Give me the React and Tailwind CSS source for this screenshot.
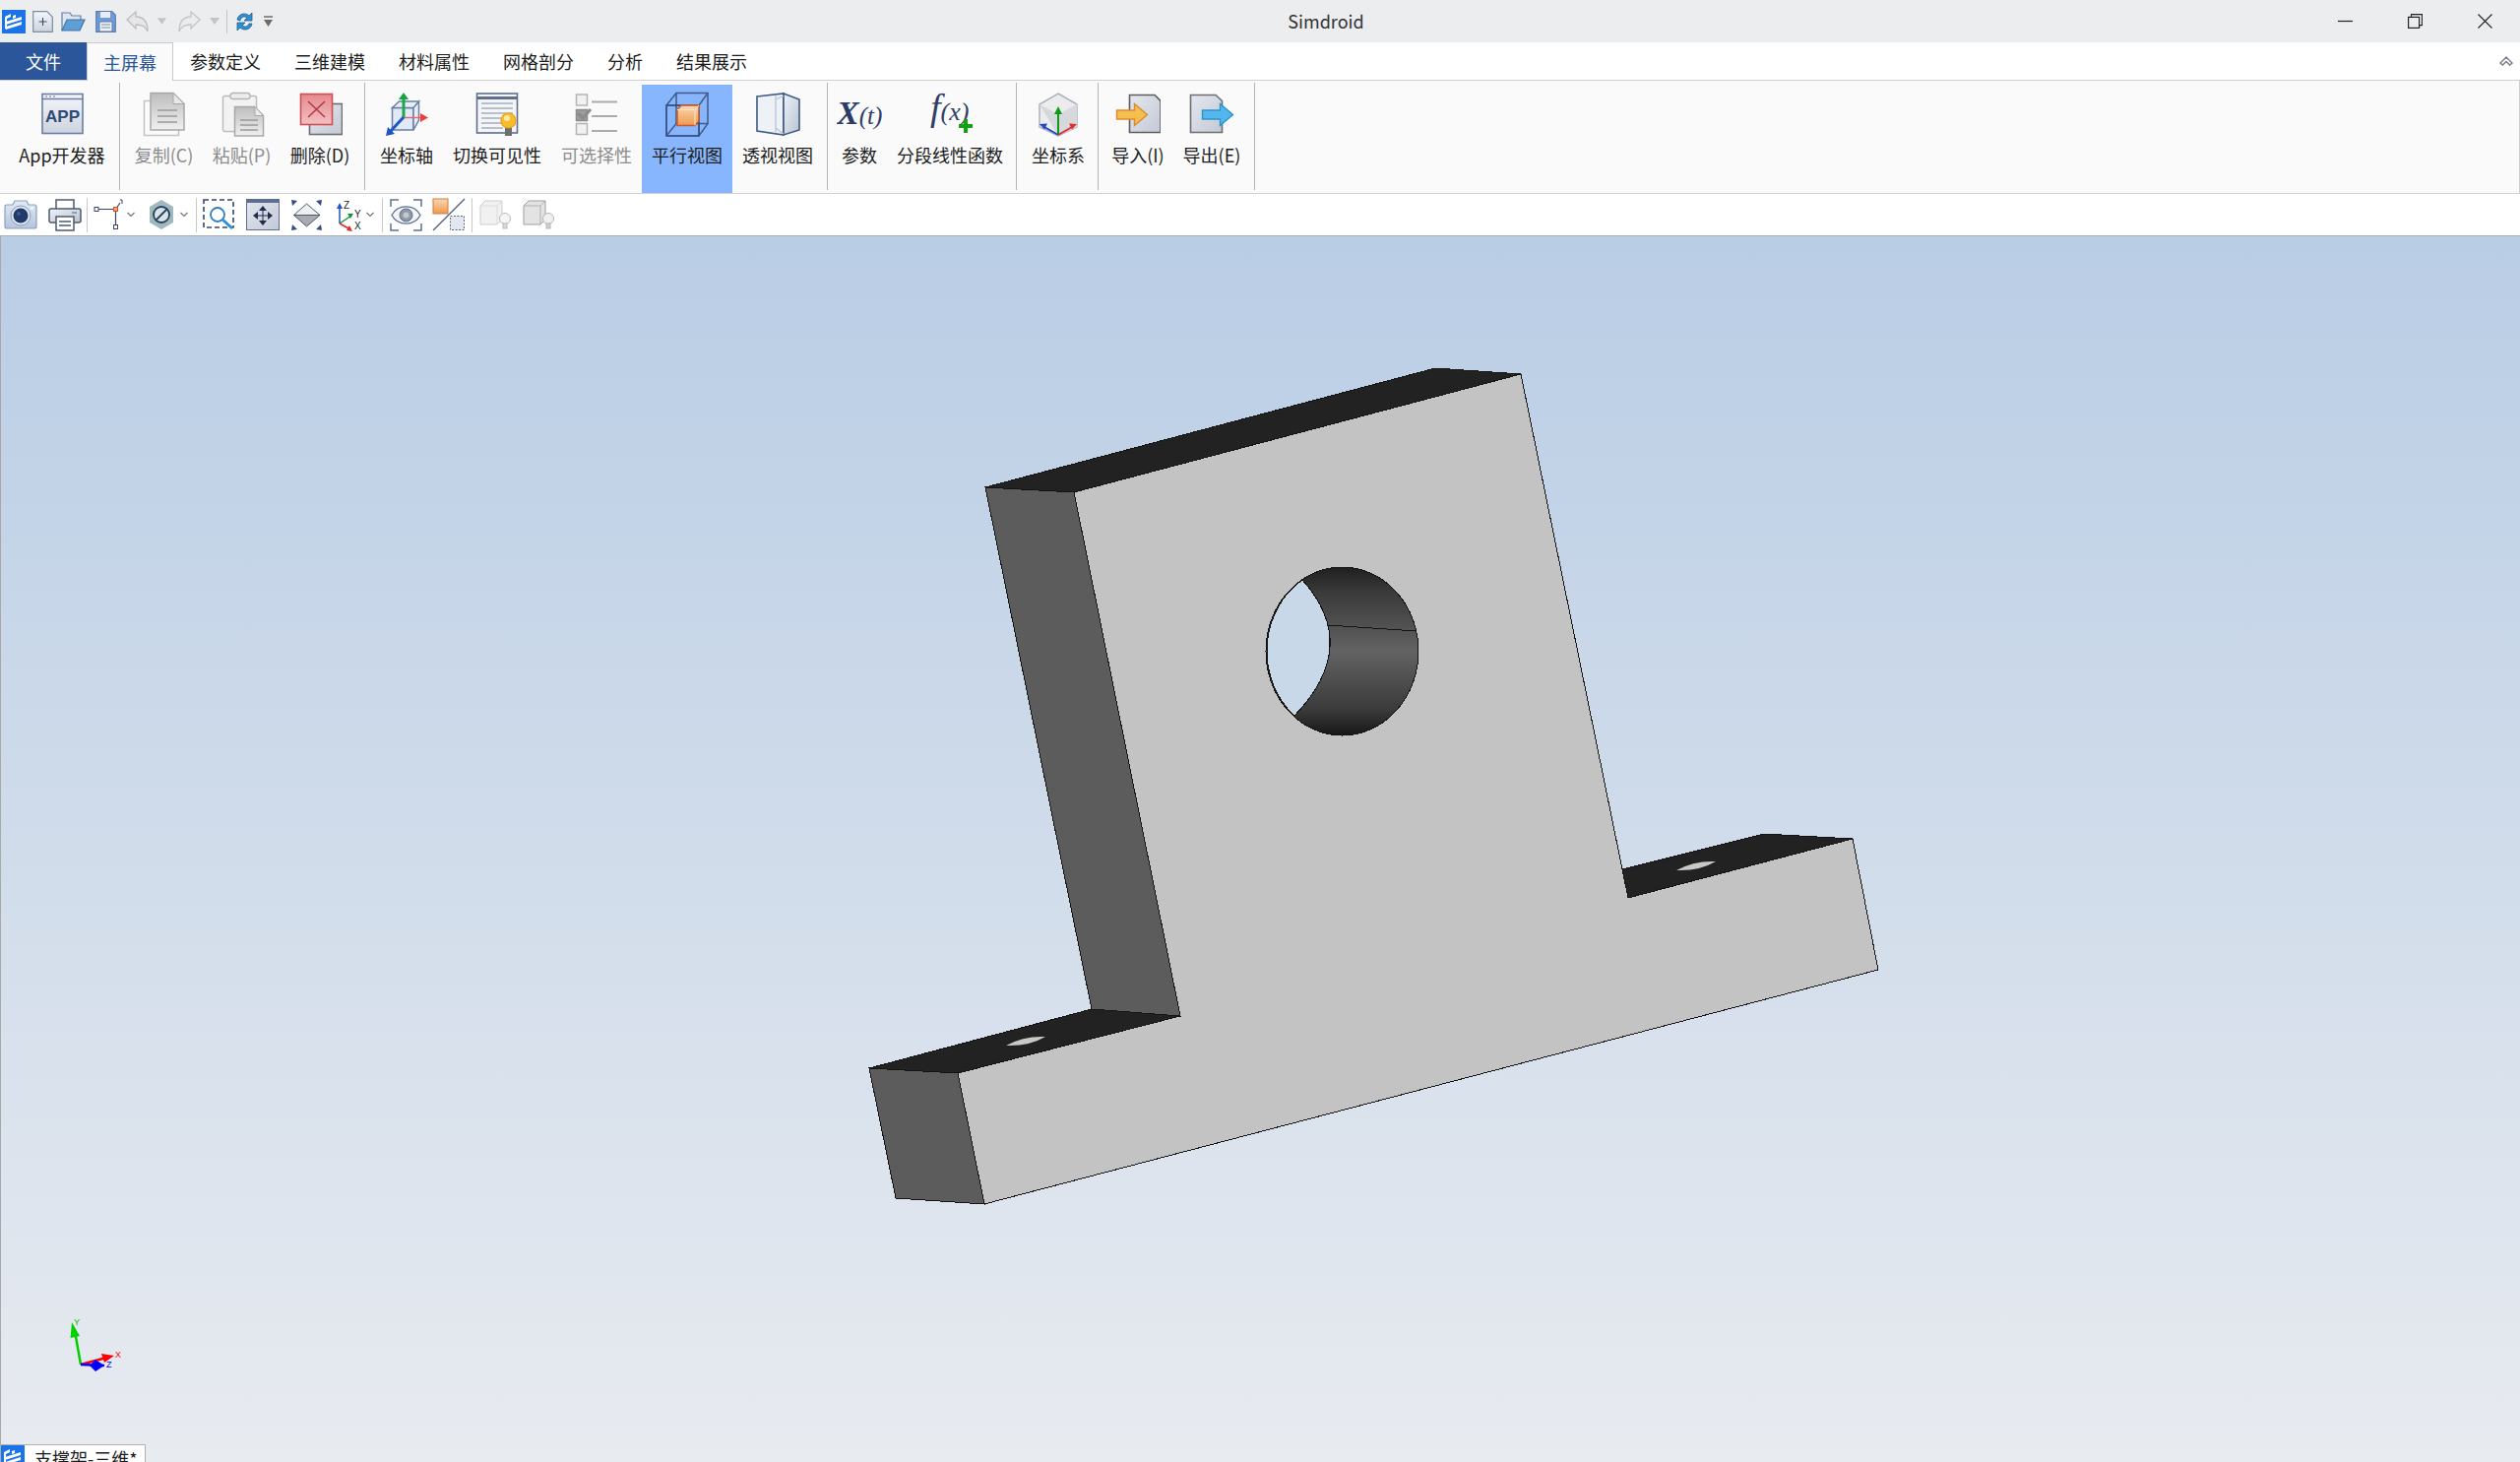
import React from "react";

const tabs = ["参数定义", "三维建模", "材料属性", "网格剖分", "分析", "结果展示"];

// shared gradients for the icon drawings
const Defs = () => (
  <svg className="absolute w-0 h-0">
    <defs>
      <linearGradient id="paper" x1="0" y1="0" x2="0" y2="1">
        <stop offset="0" stopColor="#f4f6fa" />
        <stop offset="1" stopColor="#cdd3de" />
      </linearGradient>
      <linearGradient id="paperGrey" x1="0" y1="0" x2="0" y2="1">
        <stop offset="0" stopColor="#bdbdbd" />
        <stop offset="1" stopColor="#f0f0f0" />
      </linearGradient>
      <linearGradient id="docBlue" x1="0" y1="0" x2="1" y2="1">
        <stop offset="0" stopColor="#e4e7ee" />
        <stop offset="1" stopColor="#c3c9d6" />
      </linearGradient>
      <linearGradient id="red" x1="0" y1="0" x2="0" y2="1">
        <stop offset="0" stopColor="#e58a8f" />
        <stop offset="1" stopColor="#f3c0c2" />
      </linearGradient>
      <linearGradient id="orange" x1="0" y1="0" x2="0" y2="1">
        <stop offset="0" stopColor="#f9d8b4" />
        <stop offset="1" stopColor="#ee9a4d" />
      </linearGradient>
      <linearGradient id="glass" x1="0" y1="0" x2="1" y2="1">
        <stop offset="0" stopColor="#eef3fa" />
        <stop offset="1" stopColor="#b9c2d1" />
      </linearGradient>
      <linearGradient id="camera" x1="0" y1="0" x2="0" y2="1">
        <stop offset="0" stopColor="#e3eaf4" />
        <stop offset="1" stopColor="#b4c4dc" />
      </linearGradient>
      <linearGradient id="hole" x1="0" y1="0" x2="0" y2="1">
        <stop offset="0" stopColor="#1f1f1f" />
        <stop offset="0.15" stopColor="#3a3a3a" />
        <stop offset="0.5" stopColor="#626262" />
        <stop offset="0.85" stopColor="#3a3a3a" />
        <stop offset="1" stopColor="#161616" />
      </linearGradient>
    </defs>
  </svg>
);

const Logo = ({ className }) => (
  <svg className={className} viewBox="0 0 24 24">
    <rect width="24" height="24" fill="#1a73e8" />
    <path d="M3 7l6-3v3l-6 3zM11 6l3-1v3l-3 1zM4 12l16-5v3L4 15zM4 17l16-5v3L4 20z" fill="#fff" />
    <path d="M3 8v11l2 1V9z" fill="#fff" />
  </svg>
);

const Chevron = ({ className }) => (
  <svg className={className} viewBox="0 0 8 6">
    <path d="M0.5 1l3.5 3.5L7.5 1" fill="none" stroke="#6d7683" strokeWidth="1.2" />
  </svg>
);

const Caret = ({ className }) => (
  <svg className={className} viewBox="0 0 10 7">
    <path d="M0 0h10L5 7z" fill="#c4c4c4" />
  </svg>
);

const ribbonIcons = {
  app: (
    <>
      <rect x="3" y="2.5" width="41" height="40" fill="url(#paper)" stroke="#6a7fa3" strokeWidth="1.6" />
      <path d="M3 7.5h41" stroke="#6a7fa3" strokeWidth="1.5" />
      <path d="M6 5h2M10 5h2M14 5h2" stroke="#6a7fa3" strokeWidth="1.2" />
      <text x="23.5" y="31" textAnchor="middle" fontSize="17" fontWeight="700" fill="#2f4a75" fontFamily="Liberation Sans, sans-serif">APP</text>
    </>
  ),
  copy: (
    <>
      <rect x="2.5" y="9.5" width="35" height="35" fill="#fafafa" stroke="#c2c2c2" strokeWidth="1.5" />
      <path d="M9 1.5h23l11 11V39H9z" fill="url(#paperGrey)" stroke="#a8a8a8" strokeWidth="1.5" />
      <path d="M32 1.5v11h11z" fill="#e8e8e8" stroke="#a8a8a8" />
      <path d="M16 19h20M16 25h20M16 31h20" stroke="#9a9a9a" strokeWidth="1.5" />
    </>
  ),
  paste: (
    <>
      <rect x="3.5" y="4.5" width="34" height="36" rx="2" fill="#f3f3f3" stroke="#bdbdbd" strokeWidth="1.5" />
      <rect x="11" y="1.5" width="20" height="6" rx="2.5" fill="#ececec" stroke="#b5b5b5" strokeWidth="1.3" />
      <path d="M15.5 15.5h20l9 9V45h-29z" fill="url(#paperGrey)" stroke="#a8a8a8" strokeWidth="1.5" />
      <path d="M36 15.5v9h8.5z" fill="#ededed" stroke="#a8a8a8" />
      <path d="M21 29h18M21 34h18M21 39h18" stroke="#9a9a9a" strokeWidth="1.3" />
    </>
  ),
  del: (
    <>
      <rect x="12.5" y="12.5" width="33" height="31" fill="url(#docBlue)" stroke="#6e6e6e" strokeWidth="1.6" />
      <rect x="3.5" y="2.5" width="32" height="31" fill="url(#red)" stroke="#d04f55" strokeWidth="1.6" />
      <path d="M11 10l17 16M28 10L11 26" stroke="#b23a40" strokeWidth="1.6" />
    </>
  ),
  axis: (
    <>
      <path d="M8.5 16.5h21.5v22.5H8.5z" fill="#d3e2f3" fillOpacity="0.7" stroke="#6a7fa3" strokeWidth="1.5" />
      <path d="M8.5 16.5l7-6.5h20l-5.5 6.5zM30 16.5l5.5-6.5v19L30 39z" fill="#e6eef8" stroke="#6a7fa3" strokeWidth="1.5" />
      <path d="M20 26V7" stroke="#20a848" strokeWidth="3" />
      <path d="M20 1l-5 7h10z" fill="#12a63e" />
      <path d="M20 26.5h18" stroke="#f0606a" strokeWidth="1.4" />
      <path d="M45 26.5l-8-4.5v9z" fill="#f23b3b" />
      <path d="M20 26L7 40" stroke="#1f55c9" strokeWidth="3" />
      <path d="M2 45l2-9 7 7z" fill="#1f55c9" />
    </>
  ),
  visible: (
    <>
      <rect x="2.5" y="2" width="41" height="40" fill="#f3f5f8" stroke="#5e6f8d" strokeWidth="1.6" />
      <path d="M2.5 6.5h41" stroke="#5e6f8d" strokeWidth="3" />
      <path d="M7 12h32M7 17h32M7 22h32M7 27h22M7 32h22M7 37h22" stroke="#a8afbc" strokeWidth="1.3" />
      <rect x="31" y="36" width="7" height="9" fill="#6e6e6e" />
      <circle cx="34.5" cy="29.5" r="7.5" fill="#f7bd2e" stroke="#eba017" strokeWidth="1.2" />
      <circle cx="33" cy="27" r="3" fill="#fde9a6" />
    </>
  ),
  select: (
    <>
      <rect x="2.5" y="3" width="11" height="11" fill="#f1f1f1" stroke="#b4b4b4" strokeWidth="1.5" />
      <rect x="2.5" y="18.5" width="11" height="11" fill="#9c9c9c" stroke="#8a8a8a" strokeWidth="1.5" />
      <path d="M4 22l5 5 8-9" fill="none" stroke="#8a8a8a" strokeWidth="3" />
      <rect x="2.5" y="32.5" width="11" height="11" fill="#f1f1f1" stroke="#b4b4b4" strokeWidth="1.5" />
      <path d="M18 10.5h26M18 25h26M18 40h26" stroke="#ababab" strokeWidth="2" />
    </>
  ),
  parallel: (
    <>
      <rect x="12" y="1.5" width="32" height="31" fill="none" stroke="#3f5a86" strokeWidth="1.5" />
      <rect x="2" y="14" width="33" height="31" fill="none" stroke="#2c4470" strokeWidth="1.6" />
      <path d="M2 14L12 1.5M35 14L44 1.5M35 45l9-12.5M2 45l10-12.5" stroke="#3f5a86" strokeWidth="1.4" />
      <path d="M13 18.5l4-4.5h18v16l-4 4.5H13z" fill="url(#orange)" stroke="#c9582a" strokeWidth="1.5" />
      <path d="M13 18.5h18v16M31 18.5l4-4.5" fill="none" stroke="#fbe4cb" strokeWidth="1" />
    </>
  ),
  perspective: (
    <>
      <path d="M2 5l27-3v42L2 40z" fill="#eef1f6" stroke="#3f5a86" strokeWidth="1.6" />
      <path d="M29 2l16 6v31l-16 5z" fill="url(#glass)" stroke="#3f5a86" strokeWidth="1.6" />
      <path d="M21 4.5v37M21 8l8-3.5M21 37l8 6" stroke="#b9c4d6" strokeWidth="1.3" fill="none" />
    </>
  ),
  param: (
    <text y="33" fill="#2a3c68" fontFamily="Liberation Serif, serif" fontStyle="italic">
      <tspan x="0" fontSize="34" fontWeight="700">X</tspan>
      <tspan fontSize="25">(t)</tspan>
    </text>
  ),
  func: (
    <>
      <text x="3" y="29" fill="#2f4068" fontFamily="Liberation Serif, serif" fontStyle="italic">
        <tspan fontSize="38">f</tspan>
        <tspan fontSize="26">(x)</tspan>
      </text>
      <path d="M39 28v14M32 35h14" stroke="#12a312" strokeWidth="4" />
    </>
  ),
  coord: (
    <>
      <path d="M23 2l19 11v23l-19 9-19-9V13z" fill="#ececec" stroke="#aab3bf" strokeWidth="1.5" />
      <path d="M4 13l19 10 19-10v23l-19 9z" fill="#d6d8dc" />
      <path d="M23 44V21" stroke="#0a9b18" strokeWidth="2" />
      <path d="M23 15l-4 8h8z" fill="#0a9b18" />
      <path d="M23 44l14-8" stroke="#df3030" strokeWidth="2" />
      <path d="M42 33l-8-.5 3 6z" fill="#df3030" />
      <path d="M23 44L9 36" stroke="#2049c2" strokeWidth="2" />
      <path d="M4 33l8-.5-3 6z" fill="#2049c2" />
    </>
  ),
  import: (
    <>
      <path d="M14.5 3.5H40l6 6v32H14.5z" fill="url(#docBlue)" stroke="#5d5d5d" strokeWidth="1.6" />
      <path d="M1.5 19h18v-6.5l13 11-13 11V28h-18z" fill="#f6bd4f" stroke="#dd8b2f" strokeWidth="1.4" />
    </>
  ),
  export: (
    <>
      <path d="M1.5 3.5H27l6.5 6v32H1.5z" fill="url(#docBlue)" stroke="#6f6f6f" strokeWidth="1.6" />
      <path d="M13.5 19h18v-6.5l13 11-13 11V28h-18z" fill="#53b7ec" stroke="#2b94cf" strokeWidth="1.4" />
    </>
  ),
};

const groups = [
  {
    className: "pl-[7px] pr-[2px]",
    items: [{ icon: "app", label: "App开发器", w: "w-[112px]" }],
  },
  {
    className: "pl-[5px] pr-[5px]",
    items: [
      { icon: "copy", label: "复制(C)", w: "w-[79px]", off: true },
      { icon: "paste", label: "粘贴(P)", w: "w-[79px]", off: true },
      { icon: "del", label: "删除(D)", w: "w-[80px]" },
    ],
  },
  {
    className: "pl-[5px] pr-[4px]",
    items: [
      { icon: "axis", label: "坐标轴", w: "w-[74px]" },
      { icon: "visible", label: "切换可见性", w: "w-[110px]" },
      { icon: "select", label: "可选择性", w: "w-[92px]", off: true },
      { icon: "parallel", label: "平行视图", w: "w-[92px]", active: true },
      { icon: "perspective", label: "透视视图", w: "w-[92px]" },
    ],
  },
  {
    className: "pl-[4px] pr-[3px]",
    items: [
      { icon: "param", label: "参数", w: "w-[56px]" },
      { icon: "func", label: "分段线性函数", w: "w-[128px]" },
    ],
  },
  {
    className: "pl-[5px] pr-[3px]",
    items: [{ icon: "coord", label: "坐标系", w: "w-[74px]" }],
  },
  {
    className: "pl-[4px] pr-[4px]",
    items: [
      { icon: "import", label: "导入(I)", w: "w-[72px]" },
      { icon: "export", label: "导出(E)", w: "w-[78px]" },
    ],
  },
];

const RibbonButton = ({ item }) => (
  <div
    className={`${item.w} mt-[4px] h-[110px] flex flex-col items-center pt-[7px] ${
      item.active ? "bg-[#87b6fe]" : ""
    }`}
  >
    <svg className="w-[46px] h-[46px] shrink-0" viewBox="0 0 46 46">
      {ribbonIcons[item.icon]}
    </svg>
    <div
      className={`mt-[5px] text-[18px] leading-[26px] whitespace-nowrap ${
        item.off ? "text-[#8c8c8c]" : "text-[#1c1c1c]"
      }`}
    >
      {item.label}
    </div>
  </div>
);

const ToolSep = ({ className }) => <div className={`w-px h-[35px] bg-[#c9c9c9] ${className}`} />;

const Toolbar = () => (
  <div className="h-[43px] shrink-0 bg-white border-b border-[#a9aeb5] flex items-center">
    <svg className="ml-[4px] w-[34px] h-[34px]" viewBox="0 0 34 34">
      <path d="M1 9q0-2 2-2h6l2-4h12l2 4h6q2 0 2 2v20q0 2-2 2H3q-2 0-2-2z" fill="url(#camera)" stroke="#8aa0bf" strokeWidth="1.2" />
      <circle cx="17" cy="18" r="10" fill="#dfe6f0" stroke="#8aa0bf" />
      <circle cx="17" cy="18" r="7.5" fill="#1f3a6b" />
      <circle cx="15" cy="16" r="2" fill="#3d5a8f" />
      <rect x="27" y="9.500" width="3" height="2" fill="#fff" />
    </svg>
    <svg className="ml-[11px] w-[34px] h-[34px]" viewBox="0 0 34 34">
      <path d="M8 11V2h18v9" fill="#fff" stroke="#4d5a6d" strokeWidth="1.5" />
      <rect x="1" y="11" width="32" height="14" rx="2" fill="url(#glass)" stroke="#4d5a6d" strokeWidth="1.5" />
      <path d="M24 15h5" stroke="#7f8b9b" strokeWidth="1.5" />
      <rect x="8" y="19" width="18" height="14" fill="#fff" stroke="#4d5a6d" strokeWidth="1.5" />
      <path d="M11 24h12M11 28h12" stroke="#4d5a6d" strokeWidth="1.5" />
    </svg>
    <ToolSep className="ml-[5px]" />
    <svg className="ml-[6px] w-[30px] h-[34px]" viewBox="0 0 30 34">
      <path d="M3 11.5h19.5V30M22.5 11.5L27 5" fill="none" stroke="#37476a" strokeWidth="1.2" />
      <rect x="1" y="9.5" width="4" height="4" fill="#fff" stroke="#37476a" />
      <rect x="20.5" y="9.5" width="4" height="4" fill="#f7a760" stroke="#c9502a" />
      <rect x="20.5" y="27.5" width="4" height="4" fill="#fff" stroke="#37476a" />
      <path d="M27 2h2v4" fill="none" stroke="#37476a" />
    </svg>
    <Chevron className="ml-[4px] w-[8px] h-[6px]" />
    <svg className="ml-[15px] w-[24px] h-[30px]" viewBox="0 0 24 30">
      <path d="M12 0l12 7v16l-12 7-12-7V7z" fill="#9fb9bd" />
      <circle cx="12" cy="15" r="8" fill="#d9e4e6" stroke="#24415f" strokeWidth="1.8" />
      <path d="M6 21L18 9" stroke="#24415f" strokeWidth="1.8" />
    </svg>
    <Chevron className="ml-[7px] w-[8px] h-[6px]" />
    <ToolSep className="ml-[8px]" />
    <svg className="ml-[6px] w-[32px] h-[32px]" viewBox="0 0 32 32">
      <rect x="1" y="1" width="30" height="28" fill="none" stroke="#37476a" strokeWidth="1.6" strokeDasharray="5 3" />
      <circle cx="15" cy="16" r="7" fill="#fff" stroke="#2f7fc1" strokeWidth="1.8" />
      <path d="M20 21l10 9" stroke="#2f8fd1" strokeWidth="3" />
    </svg>
    <svg className="ml-[12px] w-[34px] h-[33px]" viewBox="0 0 34 33">
      <rect x="0.5" y="0.5" width="33" height="31" fill="url(#docBlue)" stroke="#5c6f91" />
      <rect x="0.5" y="0.5" width="33" height="3.5" fill="#5c6f91" />
      <path d="M17 10v14M10 17h14" stroke="#1e2c4d" strokeWidth="1" />
      <path d="M17 7l-4 5h8zM17 27l-4-5h8zM7 17l5-4v8zM27 17l-5-4v8z" fill="#1e2c4d" />
    </svg>
    <svg className="ml-[11px] w-[33px] h-[33px]" viewBox="0 0 33 33">
      <path d="M16.5 5L30 16.5H3.500z" fill="#eef0f3" stroke="#4d5a6d" />
      <path d="M3.500 16.500h26.500L16.500 28z" fill="#a8abb0" stroke="#4d5a6d" />
      <path d="M1 1l6 1-5 5zM32 1l-6 1 5 5zM1 32l6-1-5-5zM32 32l-6-1 5-5z" fill="#2f4d80" />
    </svg>
    <svg className="ml-[14px] w-[26px] h-[33px]" viewBox="0 0 26 33">
      <path d="M3 25V8" stroke="#1f55c9" strokeWidth="1.5" />
      <path d="M3 4L0 10h6z" fill="#1f55c9" />
      <path d="M3 25l12-8" stroke="#0a9b3c" strokeWidth="1.5" />
      <path d="M17 15l-6 0 3 5z" fill="#0a9b3c" />
      <path d="M3 25l11 6" stroke="#e02a2a" strokeWidth="1.5" />
      <path d="M16 33l-6-1 3-5z" fill="#e02a2a" />
      <text x="7" y="10" fontSize="10" fill="#222" fontFamily="Liberation Sans, sans-serif">Z</text>
      <text x="18" y="19" fontSize="10" fill="#222" fontFamily="Liberation Sans, sans-serif">Y</text>
      <text x="18" y="31" fontSize="10" fill="#222" fontFamily="Liberation Sans, sans-serif">X</text>
    </svg>
    <Chevron className="ml-[4px] w-[8px] h-[6px]" />
    <ToolSep className="ml-[8px]" />
    <svg className="ml-[7px] w-[33px] h-[33px]" viewBox="0 0 33 33">
      <path d="M1 8V1h8M24 1h8v7M1 25v7h8M24 32h8v-7" fill="none" stroke="#5c6f91" strokeWidth="1.5" />
      <path d="M2 16.5C8 5 25 5 31 16.5 25 28 8 28 2 16.5z" fill="#f3f5f8" stroke="#5c6f91" strokeWidth="1.3" />
      <circle cx="16.5" cy="16.5" r="6.5" fill="#8f98a6" stroke="#5c6f91" />
      <circle cx="16.5" cy="16.5" r="3" fill="#c3c8d0" />
    </svg>
    <svg className="ml-[10px] w-[34px] h-[34px]" viewBox="0 0 34 34">
      <rect x="1" y="1" width="15" height="15" fill="url(#orange)" stroke="#d27b3c" />
      <path d="M1 33L33 1" stroke="#4d5f80" strokeWidth="1.3" />
      <rect x="18.5" y="18.5" width="14" height="14" fill="#e2e6ee" stroke="#55688a" strokeDasharray="2 1.5" />
    </svg>
    <ToolSep className="ml-[6px]" />
    <svg className="ml-[7px] w-[32px] h-[32px]" viewBox="0 0 32 32">
      <path d="M1 7l5-5h17v19l-5 5H1z" fill="#f1f1f1" stroke="#cdcdcd" />
      <path d="M1 7h17v19M18 7l5-5" fill="none" stroke="#dcdcdc" />
      <circle cx="26" cy="20" r="5.5" fill="#f5f5f5" stroke="#bcbcbc" />
      <rect x="24" y="25" width="4" height="5" fill="#d8d8d8" stroke="#bcbcbc" />
    </svg>
    <svg className="ml-[12px] w-[32px] h-[32px]" viewBox="0 0 32 32">
      <path d="M1 7l5-5h17v19l-5 5H1z" fill="#e3e3e3" stroke="#9d9d9d" />
      <path d="M1 7h17v19M18 7l5-5" fill="none" stroke="#b0b0b0" />
      <circle cx="26" cy="20" r="5.5" fill="#f0f0f0" stroke="#b5b5b5" />
      <rect x="24" y="25" width="4" height="5" fill="#cfcfcf" stroke="#b5b5b5" />
    </svg>
  </div>
);

const Model = () => (
  <svg className="block w-full h-full" viewBox="0 240 2560 1245">
    <g stroke="#141414" strokeWidth="1" shapeRendering="crispEdges">
      <path d="M1091 500L1545 380L1654 912L1882 852L1908 985L1000 1223L973 1090L1199 1032z" fill="#c3c3c3" />
      <path d="M1001 495L1458 374L1545 380L1091 500z" fill="#222222" />
      <path d="M1001 495L1091 500L1199 1032L1109 1025z" fill="#5c5c5c" />
      <path d="M883 1085L1109 1025L1199 1032L973 1090z" fill="#222222" />
      <path d="M883 1085L973 1090L1000 1223L910 1217z" fill="#5c5c5c" />
      <path d="M1648 883L1792 847L1882 852L1654 912z" fill="#222222" />
      <ellipse cx="1363.5" cy="661.5" rx="77.5" ry="85.5" fill="url(#hole)" />
      <path d="M1323 589A77.5 85.5 0 0 0 1315 727Q1383 656 1323 589z" fill="#c9d8e8" />
      <path d="M1349 635L1439 641" fill="none" />
    </g>
    {/* foot holes seen almost edge on */}
    <path d="M1022 1062Q1040 1052 1062 1053Q1045 1063 1022 1062z" fill="#c9c9c9" />
    <path d="M1703 884Q1721 874 1743 875Q1726 885 1703 884z" fill="#c9c9c9" />

    {/* triad */}
    <path d="M82 1386L76 1352" stroke="#00d000" strokeWidth="2.5" />
    <path d="M73 1343L71.5 1359L81 1357z" fill="#00d000" />
    <path d="M82 1386L108 1379" stroke="#ff0000" strokeWidth="2.5" />
    <path d="M116 1377L103 1375L106 1384z" fill="#ff0000" />
    <path d="M82 1386L106 1387" stroke="#0000ff" strokeWidth="2.5" />
    <path d="M91 1387L97 1381L106 1387L97 1393z" fill="#0000ff" />
    <text x="75" y="1346" fontSize="9" fill="#00c000" fontFamily="Liberation Sans, sans-serif">Y</text>
    <text x="117" y="1379" fontSize="9" fill="#ff0000" fontFamily="Liberation Sans, sans-serif">X</text>
    <text x="108" y="1389" fontSize="9" fill="#0000ff" fontFamily="Liberation Sans, sans-serif">Z</text>
  </svg>
);

const App = () => {
  return (
    <div className="w-[2560px] h-[1485px] overflow-hidden flex flex-col font-['Noto_Sans_CJK_SC','Liberation_Sans',sans-serif]">
      <Defs />

      {/* title bar */}
      <div className="h-[43px] shrink-0 bg-[#ecedef] flex items-center">
        <div className="w-[320px] flex items-center">
          <Logo className="ml-[2px] w-[24px] h-[24px]" />
          <svg className="ml-[7px] w-[21px] h-[22px]" viewBox="0 0 21 22">
            <path d="M.7.7h14l5.6 5.6v15H.7z" fill="url(#paper)" stroke="#7d8ba3" strokeWidth="1.2" />
            <path d="M10.5 7v8M6.5 11h8" stroke="#3b4a63" strokeWidth="1.1" />
          </svg>
          <svg className="ml-[8px] w-[25px] h-[22px]" viewBox="0 0 25 22">
            <path d="M1 20V2h8l2 3h9v4" fill="#dfe6ef" stroke="#6a7fa3" strokeWidth="1.2" />
            <path d="M1 20L6 9h18l-5 11z" fill="#5e9fd6" stroke="#3f77ab" strokeWidth="1.2" />
          </svg>
          <svg className="ml-[10px] w-[21px] h-[22px]" viewBox="0 0 21 22">
            <path d="M.7.7h16l3.6 3.6v17H.7z" fill="#6f9bd6" stroke="#5c7caf" strokeWidth="1.2" />
            <rect x="5" y="1" width="10" height="6" fill="#e7edf6" />
            <rect x="4" y="11" width="13" height="10" fill="#eef1f5" stroke="#5c7caf" />
            <path d="M6 14h9M6 17h9" stroke="#7a8ca8" />
          </svg>
          <svg className="ml-[10px] w-[23px] h-[22px]" viewBox="0 0 23 22">
            <path d="M1 9l9-8v5c8 0 12 5 12 15-2-5-5-7-12-7v4z" fill="#e6e6e6" stroke="#bdbdbd" strokeWidth="1.3" />
          </svg>
          <Caret className="ml-[9px] w-[9px] h-[7px]" />
          <svg className="ml-[12px] w-[23px] h-[22px]" viewBox="0 0 23 22">
            <path d="M22 9l-9-8v5C5 6 1 11 1 21c2-5 5-7 12-7v4z" fill="#ececec" stroke="#c4c4c4" strokeWidth="1.3" />
          </svg>
          <Caret className="ml-[9px] w-[10px] h-[7px]" />
          <div className="ml-[7px] w-px h-[24px] bg-[#c4c4c4]" />
          <svg className="ml-[8px] w-[19px] h-[24px]" viewBox="0 0 19 24">
            <path d="M2 10C3 4 10 2 14 6l3-3v8h-8l3-3C9 6 6 7 5 11z" fill="#2f8fd1" stroke="#1d5f99" strokeWidth=".8" />
            <path d="M17 14c-1 6-8 8-12 4l-3 3v-8h8l-3 3c3 2 6 1 7-2z" fill="#2f8fd1" stroke="#1d5f99" strokeWidth=".8" />
          </svg>
          <svg className="ml-[10px] w-[9px] h-[12px]" viewBox="0 0 9 12">
            <path d="M0 1h9" stroke="#6b6b6b" strokeWidth="1.5" />
            <path d="M0 4h9l-4.5 7z" fill="#6b6b6b" />
          </svg>
        </div>
        <div className="flex-1 text-center text-[18px] text-[#333]">Simdroid</div>
        <div className="w-[186px] flex items-center">
          <svg className="ml-[1px] w-[15px] h-[15px]" viewBox="0 0 15 15">
            <path d="M0 7.5h15" stroke="#222" strokeWidth="1.2" />
          </svg>
          <svg className="ml-[56px] w-[15px] h-[15px]" viewBox="0 0 15 15">
            <path d="M3.5 3V.6h11v11H12" fill="none" stroke="#222" strokeWidth="1.1" />
            <rect x=".6" y="3.4" width="11" height="11" fill="none" stroke="#222" strokeWidth="1.2" />
          </svg>
          <svg className="ml-[56px] w-[15px] h-[15px]" viewBox="0 0 15 15">
            <path d="M.5.5l14 14M14.5.5l-14 14" stroke="#222" strokeWidth="1.1" />
          </svg>
        </div>
      </div>

      {/* tab row */}
      <div className="h-[38px] shrink-0 bg-white flex text-[18px] leading-[38px] relative">
        <div className="w-[88px] bg-[#2b579a] text-white text-center">文件</div>
        <div className="w-[88px] h-[39px] bg-[#fafafa] border-x border-t border-[#c9c9c9] text-[#2b579a] text-center z-10">
          主屏幕
        </div>
        {tabs.map((t) => (
          <div key={t} className="px-[17px] text-[#1c1c1c]">
            {t}
          </div>
        ))}
        <svg className="absolute left-[2539px] top-[13px] w-[14px] h-[11px]" viewBox="0 0 14 11">
          <path d="M1 8l6-6 6 6-2.5 2L7 6.5 3.5 10z" fill="#fff" stroke="#7a818b" strokeWidth="1.5" />
        </svg>
      </div>

      {/* ribbon */}
      <div className="h-[116px] shrink-0 bg-[#fafafa] border border-[#d0d0d0] border-l-0 flex">
        {groups.map((g, i) => (
          <React.Fragment key={i}>
            <div className={`flex ${g.className}`}>
              {g.items.map((item) => (
                <RibbonButton key={item.label} item={item} />
              ))}
            </div>
            <div className="w-px h-[109px] mt-[2px] bg-[#b4b4b4]" />
          </React.Fragment>
        ))}
      </div>

      <Toolbar />

      {/* 3d view */}
      <div className="flex-1 relative overflow-hidden bg-gradient-to-b from-[#b9cde5] to-[#e8ebf0] shadow-[inset_1px_0_0_#a8a8a8]">
        <Model />
        <div className="absolute left-0 bottom-0 w-[148px] h-[18px] overflow-hidden bg-white border-t border-x border-[#b0b0b0] flex text-[18px] leading-[26px] text-[#1c1c1c]">
          <Logo className="w-[24px] h-[24px] shrink-0" />
          <div className="ml-[10px] whitespace-nowrap">支撑架-三维*</div>
        </div>
      </div>
    </div>
  );
};

export default App;
